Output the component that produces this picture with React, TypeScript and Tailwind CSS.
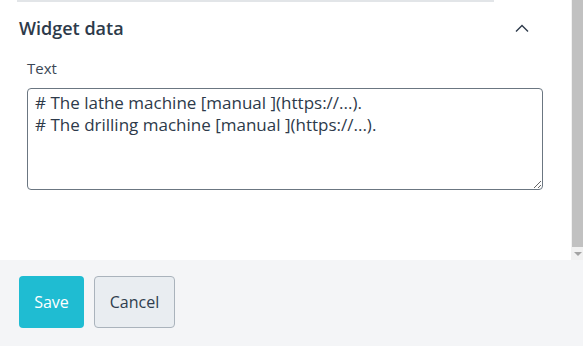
import React from "react";

const font = { fontFamily: '"Open Sans", "Noto Sans", sans-serif' };

const ChevronUp = () => (
  <svg width="14" height="8" viewBox="0 0 14 8" fill="none">
    <path d="M1 7.5L7 1.5L13 7.5" stroke="#2d3a4a" strokeWidth="1.4" />
  </svg>
);

export default function App() {
  return (
    <div
      className="w-[583px] h-[346px] flex flex-col bg-white overflow-hidden"
      style={font}
    >
      {/* scrollable panel */}
      <div className="h-[260px] flex">
        <div className="flex-1 flex flex-col">
          <div className="ml-[17px] mr-[77px] h-[2px] bg-[#e2e5e8]" />
          <div className="flex items-center justify-between pl-[19px] pr-[42px] pt-[13px]">
            <h2 className="text-[18px] font-semibold text-[#2d3a4a] leading-[26px]">
              Widget data
            </h2>
            <ChevronUp />
          </div>
          <label className="block ml-[27px] mt-[17px] text-[15px] text-[#3b4755] leading-[20px]">
            Text
          </label>
          <textarea
            readOnly
            defaultValue={
              "# The lathe machine [manual ](https://...).\n# The drilling machine [manual ](https://...)."
            }
            className="ml-[27px] mt-[10px] w-[516px] h-[102px] border border-[#6b7681] rounded-[4px] px-[7px] pt-[3px] text-[17px] leading-[22px] text-[#2d3a4a] outline-none resize"
            style={font}
          />
        </div>
        {/* scrollbar */}
        <div className="w-[12px] bg-[#f1f1f1] flex flex-col items-end">
          <div className="w-[11px] h-[247px] bg-[#c1c1c1]" />
          <div className="w-[11px] flex justify-center mt-[5px]">
            <div className="w-0 h-0 border-l-[4px] border-r-[4px] border-t-[4px] border-l-transparent border-r-transparent border-t-[#a3a3a3]" />
          </div>
        </div>
      </div>

      {/* footer */}
      <div className="flex-1 bg-[#f4f5f7] flex items-start gap-[10px] pl-[19px] pt-[16px]">
        <button className="w-[65px] h-[52px] rounded-[4px] bg-[#1fbcd2] text-white text-[16px]">
          Save
        </button>
        <button className="w-[81px] h-[52px] rounded-[4px] bg-[#e9edf1] border border-[#aab3bc] text-[#2f3e4e] text-[16px]">
          Cancel
        </button>
      </div>
    </div>
  );
}
